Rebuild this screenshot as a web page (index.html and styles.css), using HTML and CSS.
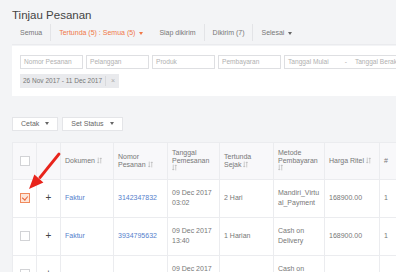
FILE: index.html
```html
<!DOCTYPE html>
<html lang="id">
<head>
    <meta charset="UTF-8">
    <meta name="viewport" content="width=device-width, initial-scale=1.0">
    <title>Tinjau Pesanan</title>
    <link rel="stylesheet" href="styles.css">
</head>
<body>

<div class="page">
    <h1 class="title">Tinjau Pesanan</h1>

    <div class="tabs">
        <span class="tab">Semua</span>
        <span class="tab active">Tertunda (5) : Semua (5) <i class="caret"></i></span>
        <span class="tab after-active">Siap dikirim</span>
        <span class="tab">Dikirim (7)</span>
        <span class="tab">Selesai <i class="caret dark"></i></span>
    </div>

    <div class="filter-card">
        <div class="filter-row">
            <div class="field">Nomor Pesanan</div>
            <div class="field">Pelanggan</div>
            <div class="field">Produk</div>
            <div class="field">Pembayaran</div>
            <div class="field wide"><span>Tanggal Mulai</span><span class="dash">-</span><span>Tanggal Berakhir</span></div>
        </div>
        <div class="tag">
            <span>26 Nov 2017 - 11 Dec 2017</span>
            <span class="tag-close">×</span>
        </div>
    </div>

    <div class="actions">
        <button class="btn">Cetak <i class="caret dark"></i></button>
        <button class="btn">Set Status <i class="caret dark"></i></button>
    </div>

    <div class="table-wrap">
        <table class="orders">
            <colgroup>
                <col style="width:24px"><col style="width:24px"><col style="width:53px">
                <col style="width:54px"><col style="width:52px"><col style="width:54px">
                <col style="width:51px"><col style="width:55px"><col style="width:40px">
            </colgroup>
            <thead>
                <tr>
                    <th class="center"><span class="check"></span></th>
                    <th></th>
                    <th>Dokumen <svg class="sort" viewBox="0 0 6 8"><path d="M1.5 .5v6.6M.4 5.9l1.1 1.2 1.1-1.2M4.5 7.5V.9M3.4 2.1l1.1-1.2 1.1 1.2"/></svg></th>
                    <th>Nomor<br>Pesanan <svg class="sort" viewBox="0 0 6 8"><path d="M1.5 .5v6.6M.4 5.9l1.1 1.2 1.1-1.2M4.5 7.5V.9M3.4 2.1l1.1-1.2 1.1 1.2"/></svg></th>
                    <th>Tanggal<br>Pemesanan<br><svg class="sort" viewBox="0 0 6 8"><path d="M1.5 .5v6.6M.4 5.9l1.1 1.2 1.1-1.2M4.5 7.5V.9M3.4 2.1l1.1-1.2 1.1 1.2"/></svg></th>
                    <th>Tertunda<br>Sejak <svg class="sort" viewBox="0 0 6 8"><path d="M1.5 .5v6.6M.4 5.9l1.1 1.2 1.1-1.2M4.5 7.5V.9M3.4 2.1l1.1-1.2 1.1 1.2"/></svg></th>
                    <th>Metode<br>Pembayaran<br><svg class="sort" viewBox="0 0 6 8"><path d="M1.5 .5v6.6M.4 5.9l1.1 1.2 1.1-1.2M4.5 7.5V.9M3.4 2.1l1.1-1.2 1.1 1.2"/></svg></th>
                    <th>Harga Ritel <svg class="sort" viewBox="0 0 6 8"><path d="M1.5 .5v6.6M.4 5.9l1.1 1.2 1.1-1.2M4.5 7.5V.9M3.4 2.1l1.1-1.2 1.1 1.2"/></svg></th>
                    <th>#</th>
                </tr>
            </thead>
            <tbody>
                <tr>
                    <td class="center"><span class="check checked"></span></td>
                    <td class="center plus">+</td>
                    <td><a class="link">Faktur</a></td>
                    <td><a class="link">3142347832</a></td>
                    <td>09 Dec 2017<br>03:02</td>
                    <td>2 Hari</td>
                    <td>Mandiri_Virtu<br>al_Payment</td>
                    <td>168900.00</td>
                    <td>1</td>
                </tr>
                <tr>
                    <td class="center"><span class="check"></span></td>
                    <td class="center plus">+</td>
                    <td><a class="link">Faktur</a></td>
                    <td><a class="link">3934795632</a></td>
                    <td>09 Dec 2017<br>13:40</td>
                    <td>1 Harian</td>
                    <td>Cash on<br>Delivery</td>
                    <td>168900.00</td>
                    <td>1</td>
                </tr>
                <tr>
                    <td class="center"><span class="check"></span></td>
                    <td class="center plus">+</td>
                    <td></td>
                    <td></td>
                    <td>09 Dec 2017<br>13:40</td>
                    <td></td>
                    <td>Cash on<br>Delivery</td>
                    <td></td>
                    <td></td>
                </tr>
            </tbody>
        </table>

        <!-- red pointer drawn over the first row's checkbox -->
        <svg class="pointer" viewBox="0 0 70 60">
            <path d="M47 12 L28 35.5" stroke="#e8241c" stroke-width="2.8" stroke-linecap="round" fill="none"/>
            <path d="M17 47 L22.4 32.6 L31.4 40.6 Z" fill="#e8241c"/>
        </svg>
    </div>
</div>

</body>
</html>
```

FILE: styles.css
```css
body {
    margin: 0;
    font-family: 'Liberation Sans', Arial, sans-serif;
    background-color: #f3f4f6;
    color: #777;
    overflow: hidden;
}
.page {
    padding: 9px 0 0 12px;
    width: 420px;
}
.title {
    margin: 0;
    font-size: 11.5px;
    font-weight: normal;
    color: #444;
    line-height: 12px;
}
.tabs {
    display: flex;
    align-items: center;
    height: 17px;
    margin-top: 3px;
    padding: 0 0 3px 0;
    border-bottom: 1px solid #eaebee;
}
.tab {
    font-size: 7px;
    padding: 0 8px;
    line-height: 17px;
    border-left: 1px solid #e3e4e7;
    color: #777;
    white-space: nowrap;
}
.tab:first-child {
    border-left: none;
}
.tab.active {
    color: #f07848;
}
.tab.after-active {
    border-left: none;
}
.caret {
    display: inline-block;
    width: 0;
    height: 0;
    margin-left: 2px;
    vertical-align: middle;
    border-left: 2px solid transparent;
    border-right: 2px solid transparent;
    border-top: 3px solid #f07848;
}
.caret.dark {
    border-top-color: #666;
}
.filter-card {
    margin-top: 1px;
    background-color: white;
    padding: 9px 8px 8px;
}
.filter-row {
    display: flex;
    gap: 3px;
}
.field {
    width: 55px;
    height: 12px;
    line-height: 12px;
    padding: 0 3px;
    border: 1px solid #dedfe2;
    font-size: 6.6px;
    color: #b0b0b0;
    white-space: nowrap;
    flex-shrink: 0;
}
.field.wide {
    width: 130px;
}
.field .dash {
    margin: 0 8px 0 16px;
}
.tag {
    display: inline-flex;
    align-items: center;
    margin-top: 4px;
    height: 14px;
    background-color: #e9eaed;
    font-size: 6.5px;
    color: #777;
    padding-left: 3px;
}
.tag-close {
    margin-left: 3px;
    padding: 0 4px 0 5px;
    border-left: 1px solid #d8d9dc;
    line-height: 10px;
    color: #aaa;
    font-size: 7px;
}
.actions {
    display: flex;
    gap: 4px;
    margin-top: 21px;
}
.btn {
    font-family: inherit;
    font-size: 7px;
    color: #666;
    background-color: white;
    border: 1px solid #e4e5e8;
    height: 14px;
    padding: 0 8px;
    display: flex;
    align-items: center;
    gap: 6px;
}
.btn .caret {
    margin-left: 0;
}
.table-wrap {
    position: relative;
    margin-top: 11px;
}
.orders {
    border-collapse: collapse;
    table-layout: fixed;
    width: 407px;
    font-size: 7px;
    background-color: white;
}
.orders th, .orders td {
    border: 1px solid #ebecef;
    padding: 0 4px;
    text-align: left;
    vertical-align: middle;
    color: #777;
}
.orders th {
    height: 36px;
    font-weight: normal;
    line-height: 7.5px;
    background-color: #f8f8fa;
}
.orders td {
    height: 37px;
    line-height: 10px;
}
.orders .center {
    text-align: center;
    padding: 0;
}
.orders .plus {
    font-size: 10px;
    color: #444;
}
.link {
    color: #5580cc;
}
.check {
    display: inline-block;
    width: 8px;
    height: 8px;
    border: 1px solid #d2d3d6;
    background-color: white;
    vertical-align: middle;
}
.check.checked {
    border-color: #f08a5d;
    background-color: #fde6d9;
    position: relative;
}
.check.checked::after {
    content: "";
    position: absolute;
    left: 2px;
    top: 1px;
    width: 3px;
    height: 4px;
    border-right: 1px solid #e8643a;
    border-bottom: 1px solid #e8643a;
    transform: rotate(40deg);
}
.sort {
    width: 5px;
    height: 7px;
    vertical-align: -1px;
    fill: none;
    stroke: #aaa;
    stroke-width: 0.7;
}
.pointer {
    position: absolute;
    left: 0;
    top: 0;
    width: 70px;
    height: 60px;
}
```
